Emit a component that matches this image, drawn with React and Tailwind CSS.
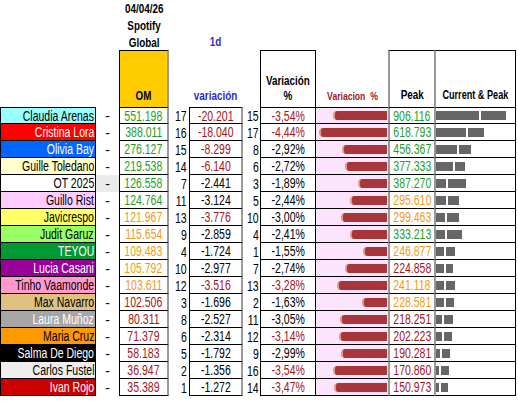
// Spotify daily chart table — spreadsheet-style layout.

const G = "text-[#1f9e1f]";
const O = "text-[#f59a10]";
const R = "text-[#a3161a]";
const K = "text-black";

const rows = [
  { name: "Claudia Arenas", bg: "bg-[#99ffff]", fg: K, om: "551.198", omc: G, r1: 17, v: "-20.201", vc: R, r2: 15, p: "-3,54%", pc: R, pct: 3.54, peak: "906.116", pkc: G, cur: 551198, pk: 906116 },
  { name: "Cristina Lora", bg: "bg-[#ff0000]", fg: "text-white", om: "388.011", omc: G, r1: 16, v: "-18.040", vc: R, r2: 17, p: "-4,44%", pc: R, pct: 4.44, peak: "618.793", pkc: G, cur: 388011, pk: 618793 },
  { name: "Olivia Bay", bg: "bg-[#0066ff]", fg: "text-white", om: "276.127", omc: G, r1: 15, v: "-8.299", vc: R, r2: 8, p: "-2,92%", pc: K, pct: 2.92, peak: "456.367", pkc: G, cur: 276127, pk: 456367 },
  { name: "Guille Toledano", bg: "bg-[#ffffcc]", fg: K, om: "219.538", omc: G, r1: 14, v: "-6.140", vc: R, r2: 6, p: "-2,72%", pc: K, pct: 2.72, peak: "377.333", pkc: G, cur: 219538, pk: 377333 },
  { name: "OT 2025", bg: "bg-white", fg: K, om: "126.558", omc: G, r1: 7, v: "-2.441", vc: K, r2: 3, p: "-1,89%", pc: K, pct: 1.89, peak: "387.270", pkc: G, cur: 126558, pk: 387270, grey: true },
  { name: "Guillo Rist", bg: "bg-[#ffccff]", fg: K, om: "124.764", omc: G, r1: 11, v: "-3.124", vc: K, r2: 5, p: "-2,44%", pc: K, pct: 2.44, peak: "295.610", pkc: O, cur: 124764, pk: 295610 },
  { name: "Javicrespo", bg: "bg-[#ffff66]", fg: K, om: "121.967", omc: O, r1: 13, v: "-3.776", vc: R, r2: 10, p: "-3,00%", pc: K, pct: 3.0, peak: "299.463", pkc: O, cur: 121967, pk: 299463 },
  { name: "Judit Garuz", bg: "bg-[#99ff66]", fg: K, om: "115.654", omc: O, r1: 9, v: "-2.859", vc: K, r2: 4, p: "-2,41%", pc: K, pct: 2.41, peak: "333.213", pkc: G, cur: 115654, pk: 333213 },
  { name: "TEYOU", bg: "bg-[#009933]", fg: "text-white", om: "109.483", omc: O, r1: 4, v: "-1.724", vc: K, r2: 1, p: "-1,55%", pc: K, pct: 1.55, peak: "246.877", pkc: O, cur: 109483, pk: 246877 },
  { name: "Lucia Casani", bg: "bg-[#990099]", fg: "text-white", om: "105.792", omc: O, r1: 10, v: "-2.977", vc: K, r2: 7, p: "-2,74%", pc: K, pct: 2.74, peak: "224.858", pkc: R, cur: 105792, pk: 224858 },
  { name: "Tinho Vaamonde", bg: "bg-[#ff99cc]", fg: K, om: "103.611", omc: O, r1: 12, v: "-3.516", vc: R, r2: 13, p: "-3,28%", pc: R, pct: 3.28, peak: "241.118", pkc: O, cur: 103611, pk: 241118 },
  { name: "Max Navarro", bg: "bg-[#dfc27f]", fg: K, om: "102.506", omc: R, r1: 3, v: "-1.696", vc: K, r2: 2, p: "-1,63%", pc: K, pct: 1.63, peak: "228.581", pkc: O, cur: 102506, pk: 228581 },
  { name: "Laura Muñoz", bg: "bg-[#a6a6a6]", fg: "text-white", om: "80.311", omc: R, r1: 8, v: "-2.527", vc: K, r2: 11, p: "-3,05%", pc: K, pct: 3.05, peak: "218.251", pkc: R, cur: 80311, pk: 218251 },
  { name: "Maria Cruz", bg: "bg-[#ff9900]", fg: K, om: "71.379", omc: R, r1: 6, v: "-2.314", vc: K, r2: 12, p: "-3,14%", pc: R, pct: 3.14, peak: "202.223", pkc: R, cur: 71379, pk: 202223 },
  { name: "Salma De Diego", bg: "bg-black", fg: "text-white", om: "58.183", omc: R, r1: 5, v: "-1.792", vc: K, r2: 9, p: "-2,99%", pc: K, pct: 2.99, peak: "190.281", pkc: R, cur: 58183, pk: 190281 },
  { name: "Carlos Fustel", bg: "bg-[#eeeeee]", fg: K, om: "36.947", omc: R, r1: 2, v: "-1.356", vc: K, r2: 16, p: "-3,54%", pc: R, pct: 3.54, peak: "170.860", pkc: R, cur: 36947, pk: 170860 },
  { name: "Ivan Rojo", bg: "bg-[#cc0000]", fg: "text-white", om: "35.389", omc: R, r1: 1, v: "-1.272", vc: K, r2: 14, p: "-3,47%", pc: R, pct: 3.47, peak: "150.973", pkc: R, cur: 35389, pk: 150973 },
];

// px per stream for the current & peak bars
const SCALE = 70 / 906116;

// narrow text: no condensed face is installed, so squeeze Liberation Sans
function N({ children, right }) {
  return (
    <span className={`inline-block whitespace-nowrap scale-x-[0.75] ${right ? "origin-right" : "origin-center"}`}>
      {children}
    </span>
  );
}

function H({ children, className = "" }) {
  return (
    <span className={`inline-block whitespace-nowrap scale-x-[0.76] origin-center ${className}`}>{children}</span>
  );
}

function Row({ r, first }) {
  const top = first ? "border-t" : "";
  return (
    <div className="flex h-[17px] text-[14px] leading-none">
      <div className={`w-[96px] ${top} border-b border-l border-r border-black ${r.bg} ${r.fg} flex items-center justify-end pr-[1px]`}>
        <N right>{r.name}</N>
      </div>
      <div className={`w-[23px] flex items-center justify-center ${r.grey ? "bg-[#ebebeb]" : ""}`}>-</div>
      <div className={`w-[50px] ${top} border-b border-l border-black border-r-2 border-r-[#9a9a9a] flex items-center justify-center ${r.omc}`}>
        <N>{r.om}</N>
      </div>
      <div className="w-[20px] flex items-center justify-end pr-[2px]">
        <N right>{r.r1}</N>
      </div>
      <div className={`w-[54px] ${top} border-b border-l border-black border-r-2 border-r-[#9a9a9a] flex items-center justify-center ${r.vc}`}>
        <N>{r.v}</N>
      </div>
      <div className="w-[17px] flex items-center justify-end pr-[1px]">
        <N right>{r.r2}</N>
      </div>
      <div className={`w-[55px] ${top} border-b border-l border-black flex items-center justify-center ${r.pc}`}>
        <N>{r.p}</N>
      </div>
      <div className={`w-[73px] ${top} border-b border-l border-black bg-[#fce4fc] flex items-center justify-end pr-[1px]`}>
        <div
          className="h-[9px] bg-[#a8353a] rounded-l-[4px] border-l-2 border-[#df9a80]"
          style={{ width: Math.round(r.pct * 15.3) }}
        />
      </div>
      <div className={`w-[46px] ${top} border-b border-black border-l-2 border-l-[#9a9a9a] flex items-center justify-center ${r.pkc}`}>
        <N>{r.peak}</N>
      </div>
      <div className={`w-[82px] ${top} border-b border-r border-black border-l-2 border-l-[#9a9a9a] flex items-center gap-[2px]`}>
        <div className="h-[9px] bg-[#666666]" style={{ width: Math.round(r.cur * SCALE) }} />
        <div className="h-[9px] bg-[#666666]" style={{ width: Math.round((r.pk - r.cur) * SCALE) - 2 }} />
      </div>
    </div>
  );
}

export default function App() {
  return (
    <div className="w-[518px] h-[410px] bg-white text-black font-['Liberation_Sans',Arial,sans-serif]">
      {/* Header */}
      <div className="flex h-[107px] font-bold text-[13px]">
        <div className="w-[96px]" />
        <div className="w-[23px]" />
        <div className="w-[50px] flex flex-col">
          <div className="h-[50px] leading-[17px] flex flex-col items-center">
            <H>04/04/26</H>
            <H>Spotify</H>
            <H>Global</H>
          </div>
          <div className="flex-1 border-t border-l border-black border-r-2 border-r-[#9a9a9a] bg-[#ffcc00] flex items-end justify-center pb-[2px]">
            <H>OM</H>
          </div>
        </div>
        <div className="w-[20px]" />
        <div className="w-[54px] flex flex-col items-center text-[#2b2bcc]">
          <div className="h-[50px] flex items-end leading-[17px]">
            <H>1d</H>
          </div>
          <div className="flex-1 flex items-end pb-[2px]">
            <H>variación</H>
          </div>
        </div>
        <div className="w-[17px]" />
        <div className="w-[55px] border-t border-l border-black flex flex-col justify-end items-center leading-[15px] pb-[4px] mt-[50px]">
          <H>Variación</H>
          <H>%</H>
        </div>
        <div className="w-[73px] border-l border-black mt-[50px] flex items-end justify-center pb-[3px] text-[10px] text-[#a3161a]">
          <span className="inline-block whitespace-nowrap scale-x-[0.86] origin-center">Variacion&nbsp;&nbsp;%</span>
        </div>
        <div className="w-[46px] border-t border-black border-l-2 border-l-[#9a9a9a] mt-[50px] flex items-end justify-center pb-[3px]">
          <H>Peak</H>
        </div>
        <div className="w-[82px] border-t border-r border-black border-l-2 border-l-[#9a9a9a] mt-[50px] flex items-end justify-center pb-[3px] text-[12px]">
          <H>Current &amp; Peak</H>
        </div>
      </div>

      {/* Rows */}
      {rows.map((r, i) => (
        <Row key={r.name} r={r} first={i === 0} />
      ))}
    </div>
  );
}
